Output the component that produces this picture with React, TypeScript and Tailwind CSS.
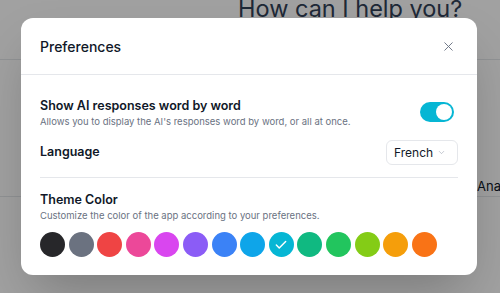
import { Check, ChevronDown, X } from "lucide-react";

const themeColors = [
  { name: "zinc", cls: "bg-[#27272a]" },
  { name: "gray", cls: "bg-[#6b7280]" },
  { name: "red", cls: "bg-[#ef4444]" },
  { name: "pink", cls: "bg-[#ec4899]" },
  { name: "fuchsia", cls: "bg-[#d946ef]" },
  { name: "violet", cls: "bg-[#8b5cf6]" },
  { name: "blue", cls: "bg-[#3b82f6]" },
  { name: "sky", cls: "bg-[#0ea5e9]" },
  { name: "cyan", cls: "bg-[#06b6d4]" },
  { name: "emerald", cls: "bg-[#10b981]" },
  { name: "green", cls: "bg-[#22c55e]" },
  { name: "lime", cls: "bg-[#84cc16]" },
  { name: "amber", cls: "bg-[#f59e0b]" },
  { name: "orange", cls: "bg-[#f97316]" },
];

export default function App() {
  const selected = "cyan";

  return (
    <div className="relative w-[500px] h-[293px] overflow-hidden bg-white font-['Inter',sans-serif]">
      {/* page behind the dialog */}
      <div className="flex flex-col h-full">
        <div className="h-[60px] border-b border-gray-200 flex pl-[238px]">
          <h1 className="text-[23.5px] leading-[24px] -mt-[3px] text-slate-700 whitespace-nowrap">How can I help you?</h1>
        </div>
        <div className="flex-1" />
        <div className="h-[28px] mb-[96px] border-b border-gray-200 flex items-end">
          <span className="text-[13px] text-gray-900 pl-[477px] whitespace-nowrap">Analyze</span>
        </div>
      </div>

      {/* overlay */}
      <div className="absolute inset-0 bg-black/[0.37]" />

      {/* dialog */}
      <div className="absolute left-[21px] top-[18px] w-[456px] bg-white rounded-xl shadow-2xl">
        <div className="h-[57px] px-[19px] flex items-center justify-between border-b border-gray-200">
          <h2 className="text-[14px] font-medium text-gray-900">Preferences</h2>
          <X className="w-[15px] h-[15px] text-gray-500 mr-[2px]" strokeWidth={1.5} />
        </div>

        <div className="px-[19px] pt-[22px] pb-[18px]">
          <div className="flex items-center justify-between">
            <div>
              <p className="text-[12.5px] leading-[18px] font-semibold text-gray-900">Show AI responses word by word</p>
              <p className="text-[9.5px] leading-[14px] text-gray-500">Allows you to display the AI's responses word by word, or all at once.</p>
            </div>
            <div className="w-[34px] h-[20px] rounded-full bg-[#06b6d4] flex items-center justify-end pr-[2px] mr-[4px] -mt-[2px]">
              <div className="w-[16px] h-[16px] rounded-full bg-white" />
            </div>
          </div>

          <div className="flex items-center justify-between mt-[11px]">
            <p className="text-[12.5px] font-semibold text-gray-900">Language</p>
            <div className="w-[72px] h-[25px] border border-gray-200 rounded-md flex items-center justify-between pl-[7px] pr-[11px]">
              <span className="text-[12px] text-gray-900">French</span>
              <ChevronDown className="w-[9px] h-[9px] text-gray-400" strokeWidth={1.5} />
            </div>
          </div>

          <div className="h-px bg-gray-200 mt-[12px]" />

          <div className="mt-[13px]">
            <p className="text-[12.5px] leading-[18px] font-semibold text-gray-900">Theme Color</p>
            <p className="text-[9.5px] leading-[14px] text-gray-500">Customize the color of the app according to your preferences.</p>
            <div className="flex gap-[3.6px] mt-[9px]">
              {themeColors.map((c) => (
                <div
                  key={c.name}
                  className={`w-[25px] h-[25px] rounded-full flex items-center justify-center ${c.cls}`}
                >
                  {c.name === selected && <Check className="w-[14px] h-[14px] text-white" strokeWidth={2.5} />}
                </div>
              ))}
            </div>
          </div>
        </div>
      </div>
    </div>
  );
}
